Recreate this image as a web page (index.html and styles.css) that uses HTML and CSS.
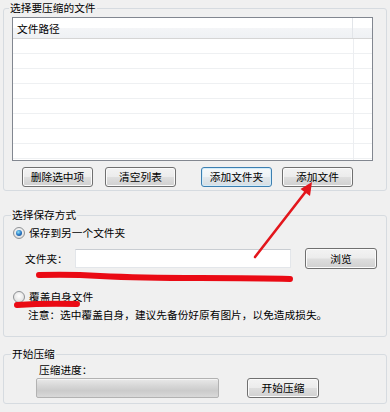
FILE: index.html
```html
<!DOCTYPE html>
<html lang="zh-CN">
<head>
<meta charset="utf-8">
<title>压缩</title>
<link rel="stylesheet" href="styles.css">
</head>
<body>
<div class="win">
  <fieldset class="group g1">
    <legend class="glabel">选择要压缩的文件</legend>
    <div class="list">
      <div class="list-head">
        <div class="col col-path">文件路径</div>
        <div class="col col-rest"></div>
      </div>
      <div class="list-body"></div>
    </div>
    <div class="btnrow">
      <button class="btn">删除选中项</button>
      <button class="btn b2">清空列表</button>
      <button class="btn b3 focus">添加文件夹</button>
      <button class="btn b4">添加文件</button>
    </div>
  </fieldset>

  <fieldset class="group g2">
    <legend class="glabel">选择保存方式</legend>
    <div class="opt">
      <span class="radio on"></span><span class="opt-text">保存到另一个文件夹</span>
    </div>
    <div class="folder">
      <span class="folder-label">文件夹：</span>
      <span class="input"></span>
      <button class="btn browse">浏览</button>
    </div>
    <div class="opt opt2">
      <span class="radio"></span><span class="opt-text">覆盖自身文件</span>
    </div>
    <div class="note">注意：选中覆盖自身，建议先备份好原有图片，以免造成损失。</div>
  </fieldset>

  <fieldset class="group g3">
    <legend class="glabel">开始压缩</legend>
    <div class="prog-label">压缩进度：</div>
    <div class="prog-row">
      <div class="progress"></div>
      <button class="btn start">开始压缩</button>
    </div>
  </fieldset>
</div>

<svg class="annot" width="390" height="412" viewBox="0 0 390 412" xmlns="http://www.w3.org/2000/svg">
  <path d="M39 275 Q 70 274 100 276 Q 140 278 200 278 Q 260 278 290 279" fill="none" stroke="#ea0a14" stroke-width="6" stroke-linecap="round"/>
  <path d="M17 305 Q 45 303 77 304" fill="none" stroke="#ea0a14" stroke-width="6" stroke-linecap="round"/>
  <line x1="255" y1="257" x2="307" y2="190" stroke="#e3161c" stroke-width="2.6" stroke-linecap="round"/>
  <polygon points="312,182 310,196 300.5,189" fill="#e3161c"/>
</svg>
</body>
</html>
```

FILE: styles.css
```css
html, body {
  margin: 0;
  padding: 0;
}

body {
  width: 390px;
  height: 412px;
  position: relative;
  overflow: hidden;
  background: #f0f0f0;
  font-family: "Noto Sans CJK SC", "Noto Sans", sans-serif;
  font-size: 10.7px;
  color: #000;
}

.win {
  padding: 2px 0 0 3px;
}

.group {
  box-sizing: border-box;
  width: 384px;
  margin: 0;
  padding: 0;
  min-width: 0;
  border: 1px solid #d6dbe0;
  border-radius: 3px;
}

.glabel {
  margin-left: 7px;
  padding: 0 1px;
  font-size: 10.7px;
  line-height: 12px;
}

.g1 {
  padding: 3px 0 3px 0;
}

.g1 .glabel {
  margin-left: 5px;
}

.list {
  box-sizing: border-box;
  width: 361px;
  height: 144px;
  margin-left: 8px;
  border: 1px solid #828790;
  background: #fff;
  display: flex;
  flex-direction: column;
}

.list-head {
  display: flex;
  height: 20px;
  border-bottom: 1px solid #d5d5d5;
  background: linear-gradient(#ffffff 0%, #ffffff 50%, #f4f5f7 50%, #eff1f4 100%);
}

.col {
  line-height: 20px;
  padding-top: 1px;
  box-sizing: border-box;
}

.col-path {
  width: 340px;
  padding-left: 4px;
  border-right: 1px solid #e2e5e9;
}

.col-rest {
  flex: 1;
}

.list-body {
  flex: 1;
  background:
    linear-gradient(to right, transparent 340px, #eceef1 340px, #eceef1 341px, transparent 341px),
    repeating-linear-gradient(to bottom, transparent 0, transparent 14px, #eef0f2 14px, #eef0f2 15px);
}

.btnrow {
  display: flex;
  margin: 6px 0 0 18px;
}

.btn {
  box-sizing: border-box;
  width: 71px;
  height: 20px;
  padding: 0;
  border: 1px solid #707070;
  border-radius: 3px;
  background: linear-gradient(#f3f3f3 0%, #ececec 48%, #dedede 52%, #d0d0d0 100%);
  box-shadow: inset 0 0 0 1px #fbfbfb;
  font-family: "Noto Sans CJK SC", "Noto Sans", sans-serif;
  font-size: 10.7px;
  line-height: 18px;
  color: #000;
  text-align: center;
}

.btn.focus {
  border-color: #3c7fb1;
  box-shadow: inset 0 0 0 1px #d2ecfa;
  background: linear-gradient(#f5f9fb 0%, #eef2f5 48%, #e2e8ec 52%, #d6dde2 100%);
}

.b2 { margin-left: 12px; }
.b3 { margin-left: 25px; }
.b4 { margin-left: 10px; }

.g2 {
  margin-top: 18px;
  padding: 5px 0 14px 0;
}

.opt {
  display: flex;
  align-items: center;
  height: 14px;
  margin-left: 9px;
}

.radio {
  box-sizing: border-box;
  width: 12px;
  height: 12px;
  border: 1px solid #8f9295;
  border-radius: 50%;
  background: radial-gradient(circle at 50% 40%, #ffffff 0%, #e9e9e9 55%, #d0d0d0 100%);
  display: flex;
  align-items: center;
  justify-content: center;
  flex: none;
}

.radio.on::after {
  content: "";
  width: 6px;
  height: 6px;
  border-radius: 50%;
  background: radial-gradient(circle at 40% 35%, #8fe4f7 0%, #2b7ac6 50%, #0f3d7e 100%);
}

.opt-text {
  margin-left: 4px;
  line-height: 14px;
}

.folder {
  display: flex;
  align-items: center;
  height: 21px;
  margin: 8px 0 0 21px;
}

.folder-label {
  width: 50px;
}

.input {
  box-sizing: border-box;
  width: 216px;
  height: 19px;
  background: #fff;
  border: 1px solid #e3e6ea;
  border-top-color: #c9cdd2;
}

.browse {
  width: 72px;
  height: 21px;
  margin-left: 14px;
}

.opt2 {
  margin-top: 21px;
}

.note {
  margin: 4px 0 0 24px;
  line-height: 14px;
}

.g3 {
  margin-top: 11px;
  padding: 4px 0 5px 0;
}

.prog-label {
  margin-left: 35px;
  line-height: 12px;
}

.prog-row {
  display: flex;
  margin: 2px 0 0 32px;
}

.progress {
  box-sizing: border-box;
  width: 183px;
  height: 20px;
  border: 1px solid #b2b2b2;
  border-radius: 2px;
  background: linear-gradient(#e9e9e9 0%, #d8d8d8 35%, #cbcbcb 65%, #d9d9d9 100%);
  box-shadow: inset 0 1px 0 #f4f4f4;
}

.start {
  width: 72px;
  margin-left: 28px;
}

.annot {
  position: absolute;
  left: 0;
  top: 0;
  pointer-events: none;
}
```
